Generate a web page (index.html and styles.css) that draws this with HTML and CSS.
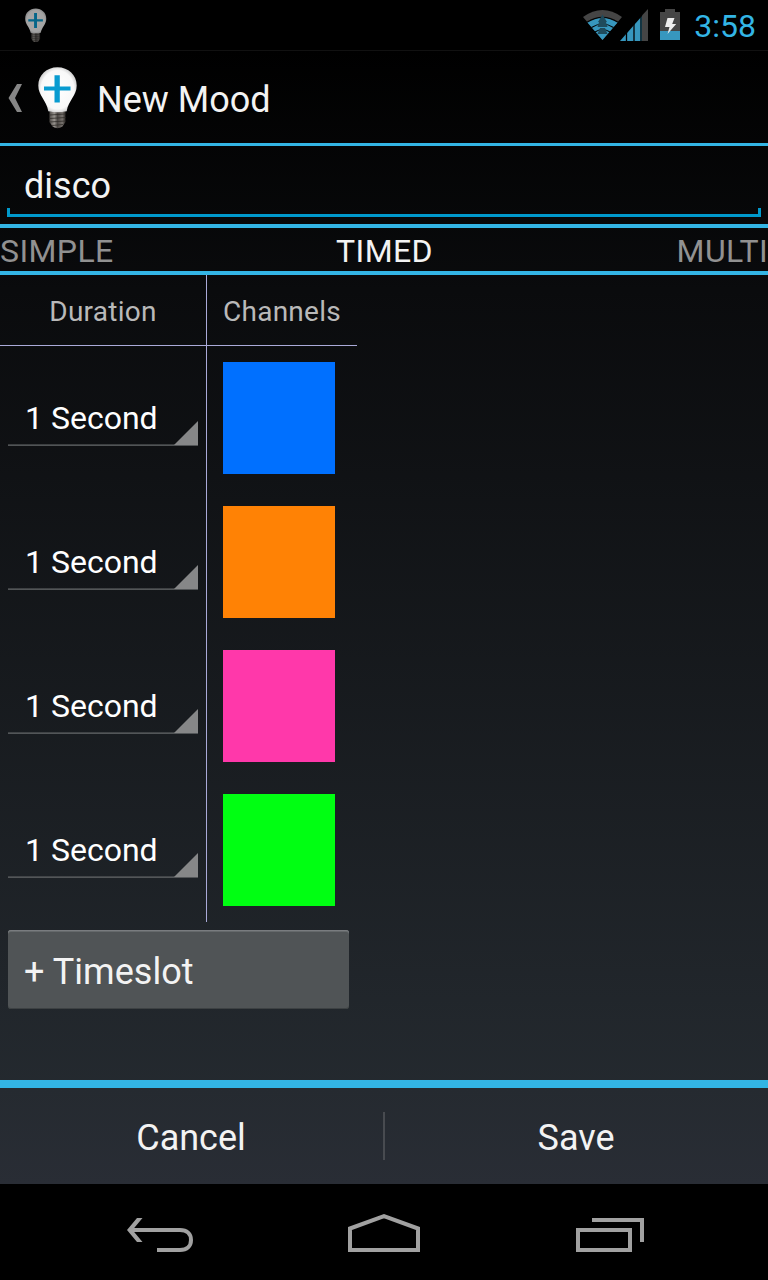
FILE: index.html
```
<!DOCTYPE html>
<html lang="en">
<head>
<meta charset="utf-8">
<title>New Mood</title>
<link rel="stylesheet" href="styles.css">
</head>
<body>
<svg width="0" height="0" class="defs">
  <defs>
    <radialGradient id="glass" cx="0.5" cy="0.5" r="0.55">
      <stop offset="0" stop-color="#fff"/><stop offset="0.78" stop-color="#f8f8f8"/><stop offset="1" stop-color="#c4c4c4"/>
    </radialGradient>
    <linearGradient id="base" x1="0" x2="1" y1="0" y2="0">
      <stop offset="0" stop-color="#4e4a47"/><stop offset="0.3" stop-color="#98948f"/><stop offset="0.5" stop-color="#4a4643"/><stop offset="0.8" stop-color="#77726e"/><stop offset="1" stop-color="#2c2926"/>
    </linearGradient>
    <symbol id="bulb" viewBox="0 0 40 62">
      <path d="M11.5 44.5h16v10.5l-3 4.5q-5 3.4-10 0l-3-4.5z" fill="url(#base)"/>
      <path d="M11.5 48l16-1M11.5 51.5l16-1M11.5 55l16-1M14 58.5l11-1" stroke="#302d2a" stroke-width="0.8"/>
      <path d="M19.5.3C30.500.3 38.700 8.200 38.700 18.500C38.700 29 30.500 33 28.700 44.200Q19.500 46.200 10.300 44.200C8.500 33 .3 29 .3 18.500C.3 8.200 8.500.3 19.500.3Z" fill="url(#glass)"/>
      <path d="M16.500 8.300h5.300V19.500H32.500v4H21.800V35.500H16.500V23.500H6v-4H16.500z" fill="#089bd0"/>
    </symbol>
  </defs>
</svg>
<div class="screen">
  <header class="status">
    <svg class="notice" width="22" height="35"><use href="#bulb"/></svg>
    <div class="indicators">
      <svg class="signals" width="66" height="34" viewBox="583 8 66 34">
        <path d="M583 17Q602.500 3 622 17L602.500 40Z" fill="#454545"/>
        <path d="M587.200 22.300Q602.500 12.500 617.800 22.300L602.500 40Z" fill="#3797be"/>
        <path d="M587 22.300Q602.500 12.500 618 22.300M591.500 27.500Q602.500 20.500 613.500 27.500M595 32Q602.500 27 610 32" fill="none" stroke="#050505" stroke-width="1.2"/>
        <path d="M602.500 14.500l4.500 7.500h-9zM599 22h7l1.500 5h-10zM600 28h5l2.500 6h-10z" fill="#1f4b5c"/>
        <path d="M620 41L642 16V41Z" fill="#3797be"/>
        <path d="M642 15.500L648 9V41H642Z" fill="#454545"/>
        <path d="M626.500 30V41M634 23V41M641 16V41" stroke="#000" stroke-width="1.300"/>
      </svg>
      <svg class="battery" width="20" height="32" viewBox="0 0 20 32">
        <path d="M5 0h10v3h5v28H0V3h5z" fill="#454545"/>
        <path d="M0 22h20v9H0z" fill="#3797be"/>
        <path d="M7.500 9h7l-2.300 6h4L7.500 25l2-7H5z" fill="#ededed"/>
      </svg>
      <span class="clock">3:58</span>
    </div>
  </header>
  <div class="actionbar">
    <svg class="up" width="14" height="28" viewBox="0 0 14 28"><path d="M9 0H14L7 14L14 28H9L.5 14Z" fill="#868686"/></svg>
    <svg class="logo" width="40" height="62"><use href="#bulb"/></svg>
    <h1 class="title">New Mood</h1>
  </div>
  <div class="namebox"><div class="field"><span class="name">disco</span></div></div>
  <nav class="tabs"><span class="tab simple">SIMPLE</span><span class="tab timed">TIMED</span><span class="tab multi">MULTI</span></nav>
  <main class="content">
    <div class="table">
      <div class="row head"><div class="cell"><span class="duration">Duration</span></div><div class="cell channel"><span class="channels">Channels</span></div></div>
      <div class="row"><div class="cell"><div class="spinner"><span class="second">1 Second</span></div></div><div class="cell channel"><div class="swatch blue"></div></div></div>
      <div class="row"><div class="cell"><div class="spinner"><span class="second">1 Second</span></div></div><div class="cell channel"><div class="swatch orange"></div></div></div>
      <div class="row"><div class="cell"><div class="spinner"><span class="second">1 Second</span></div></div><div class="cell channel"><div class="swatch pink"></div></div></div>
      <div class="row"><div class="cell"><div class="spinner"><span class="second">1 Second</span></div></div><div class="cell channel"><div class="swatch green"></div></div></div>
    </div>
    <div class="add"><span class="timeslot">+ Timeslot</span></div>
  </main>
  <footer class="buttons"><div class="action"><span class="cancel">Cancel</span></div><div class="divider"></div><div class="action"><span class="save">Save</span></div></footer>
  <div class="navbar">
    <svg width="768" height="96" viewBox="0 1184 768 96" fill="none" stroke="#a1a1a1" stroke-width="4">
      <path d="M131 1230H180C187 1230 191 1234 191 1240C191 1246 187 1250 180 1250H157"/>
      <path d="M137 1218H142.500L132.500 1230L142.500 1242H137L127 1230Z" fill="#a1a1a1" stroke="none"/>
      <path d="M350 1250V1228.500L384 1216.200L418 1228.500V1250Z"/>
      <path d="M578 1230H630V1250H578ZM592 1220H642V1242"/>
    </svg>
  </div>
</div>
</body>
</html>
```
FILE: styles.css
```
* { box-sizing: border-box; }
body { margin: 0; background: #000; font-family: Roboto, sans-serif; color: #f3f3f3; }
.defs { display: block; }
.screen {
  width: 768px; height: 1280px; overflow: hidden;
  display: flex; flex-direction: column;
  font-size: 36px; white-space: nowrap;
  background: linear-gradient(#000 50px, #0a0b0d 290px, #272d33 1184px);
}
.status {
  flex: none; height: 51px; display: flex; justify-content: space-between; align-items: flex-start;
  background: #000; border-bottom: 1px solid #111; padding: 8px 12px 0 25px;
}
.notice { opacity: .66; }
.indicators { display: flex; }
.battery { margin: 1px 14px 0 11px; }
.clock { font-size: 32px; line-height: 36px; color: #33b5e5; }
.actionbar { flex: none; height: 95px; display: flex; border-bottom: 3px solid #33b5e5; padding-left: 8px; }
.up { margin-top: 33px; margin-right: 16px; }
.logo { margin-top: 16px; margin-right: 19px; }
.title { margin: 0; font-size: 36px; font-weight: 400; line-height: 99px; }
.namebox { flex: none; height: 82px; border-bottom: 4px solid #33b5e5; padding: 0 7px; }
.field {
  height: 71px; padding: 0 17px; line-height: 81px;
  background:
    linear-gradient(#09c, #09c) left bottom / 3px 9px no-repeat,
    linear-gradient(#09c, #09c) right bottom / 3px 9px no-repeat,
    linear-gradient(#09c, #09c) left bottom / 100% 3px no-repeat;
}
.tabs {
  flex: none; height: 47px; border-bottom: 4px solid #33b5e5;
  display: grid; grid-template-columns: 1fr 1fr 1fr; font-size: 32px; line-height: 46px; color: #919191;
}
.tab { letter-spacing: .4px; }
.timed { text-align: center; padding-left: 1px; color: #f3f3f3; }
.multi { text-align: right; }
.content { flex: 1; }
.table { width: 357px; }
.row { display: grid; grid-template-columns: 206px 1fr; height: 144px; }
.head { height: 71px; border-bottom: 1px solid #aaaad8; font-size: 28px; line-height: 73px; letter-spacing: .25px; color: #b9b9b9; text-align: center; }
.channel { border-left: 1px solid #aaaad8; padding: 16px; }
.head .channel { padding: 0; height: 71px; }
.spinner {
  margin: 48px 8px 0; height: 52px; padding-left: 17px;
  font-size: 32px; line-height: 48px; color: #fff;
  background:
    linear-gradient(135deg, transparent 49%, #868788 51%) right 0 bottom 1px / 24px 24px no-repeat,
    linear-gradient(#53565880, #5c5f61) left bottom / 100% 2px no-repeat;
}
.swatch { width: 112px; height: 112px; }
.blue { background: #0070ff; }
.orange { background: #ff8205; }
.pink { background: #ff38aa; }
.green { background: #00ff12; }
.add {
  margin: 8px; width: 341px; height: 79px; padding-left: 16px; line-height: 84px; letter-spacing: .05px;
  background: #505456; border-radius: 3px;
  box-shadow: inset 0 1px #797c7f, inset 0 2px #65696b, inset 0 -1px #3d4143;
}
.buttons { flex: none; height: 104px; border-top: 8px solid #33b5e5; display: flex; align-items: center; background: linear-gradient(#252a30, #292d35); }
.action { flex: 1; text-align: center; height: 96px; line-height: 101px; padding-right: 1px; }
.divider { width: 2px; height: 48px; background: #484b50; }
.navbar { flex: none; height: 96px; background: #000; }
.navbar svg { display: block; }
```
